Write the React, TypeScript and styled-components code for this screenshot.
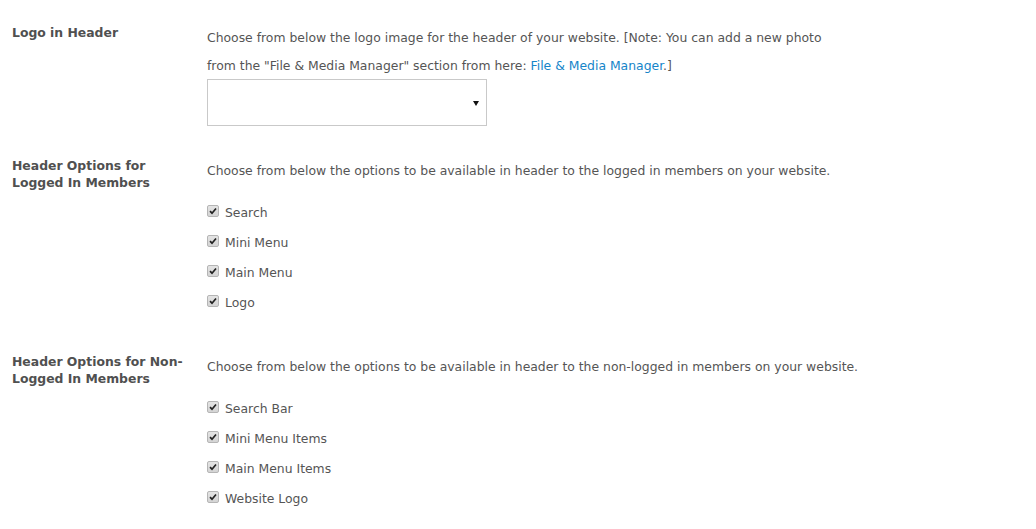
import React from "react";
import styled, { createGlobalStyle } from "styled-components";

const Global = createGlobalStyle`
  html, body { margin: 0; padding: 0; background: #fff; }
  body { font-family: "DejaVu Sans", Verdana, sans-serif; color: #555; }
`;

const Page = styled.div`
  padding: 23px 0 0 12px;
  display: flex;
  flex-direction: column;
  gap: 30px;
`;

const Row = styled.div<{ $gap?: number }>`
  display: grid;
  grid-template-columns: 195px 1fr;
  margin-bottom: ${(p) => p.$gap ?? 0}px;
`;

const Label = styled.div`
  font-size: 12.4px;
  font-weight: bold;
  line-height: 17px;
  color: #505050;
  padding-top: 1px;
`;

const Content = styled.div`
  display: flex;
  flex-direction: column;
  align-items: flex-start;
`;

const Desc = styled.p`
  margin: 0 0 -1px;
  padding-top: 1px;
  font-size: 12.4px;
  line-height: 28px;
  color: #555;
  white-space: nowrap;
`;

const Link = styled.a`
  color: #1585c9;
  text-decoration: none;
`;

const SelectBox = styled.div`
  box-sizing: border-box;
  width: 280px;
  height: 47px;
  border: 1px solid #c9c9c9;
  background: #fff;
  display: flex;
  align-items: center;
  justify-content: flex-end;
  padding-right: 7px;
`;

const Caret = styled.span`
  width: 0;
  height: 0;
  border-left: 3px solid transparent;
  border-right: 3px solid transparent;
  border-top: 5px solid #111;
  margin-top: 1px;
`;

const Options = styled.ul`
  list-style: none;
  margin: 13px 0 0;
  padding: 0;
`;

const Option = styled.li`
  height: 30px;
  display: flex;
  align-items: center;
  gap: 6px;
  font-size: 12.4px;
  color: #555;
`;

const Box = styled.span`
  box-sizing: border-box;
  width: 12px;
  height: 12px;
  border: 1px solid #b5b5b5;
  border-radius: 2px;
  background: linear-gradient(#e4e4e4, #d4d4d4);
  display: flex;
  align-items: center;
  justify-content: center;
  margin-top: -2px;
`;

const Check = () => (
  <Box>
    <svg width="8" height="8" viewBox="0 0 8 8">
      <path d="M1 4.2 L3 6.2 L7 1.5" stroke="#222" strokeWidth="1.7" fill="none" />
    </svg>
  </Box>
);

const OptionList = ({ items }: { items: string[] }) => (
  <Options>
    {items.map((t) => (
      <Option key={t}>
        <Check />
        {t}
      </Option>
    ))}
  </Options>
);

export default function App() {
  return (
    <>
      <Global />
      <Page>
        <Row>
          <Label>Logo in Header</Label>
          <Content>
            <Desc>
              Choose from below the logo image for the header of your website. [Note: You can add a new photo
              <br />
              from the "File &amp; Media Manager" section from here: <Link href="#">File &amp; Media Manager</Link>.]
            </Desc>
            <SelectBox>
              <Caret />
            </SelectBox>
          </Content>
        </Row>
        <Row $gap={5}>
          <Label>
            Header Options for
            <br />
            Logged In Members
          </Label>
          <Content>
            <Desc>Choose from below the options to be available in header to the logged in members on your website.</Desc>
            <OptionList items={["Search", "Mini Menu", "Main Menu", "Logo"]} />
          </Content>
        </Row>
        <Row>
          <Label>
            Header Options for Non-
            <br />
            Logged In Members
          </Label>
          <Content>
            <Desc>Choose from below the options to be available in header to the non-logged in members on your website.</Desc>
            <OptionList items={["Search Bar", "Mini Menu Items", "Main Menu Items", "Website Logo"]} />
          </Content>
        </Row>
      </Page>
    </>
  );
}
